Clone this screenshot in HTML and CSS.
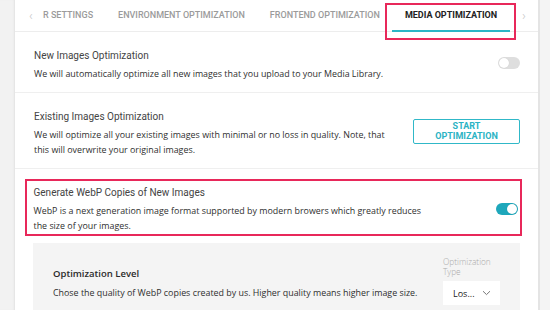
FILE: index.html
```html
<!DOCTYPE html>
<html lang="en">
<head>
<meta charset="utf-8">
<link rel="stylesheet" href="styles.css">
</head>
<body>
<div class="page">
  <div class="gutter"></div>
  <div class="panel">
    <div class="tabs">
      <span class="arrow">&#8249;</span>
      <span class="tab first">R SETTINGS</span>
      <span class="tab">ENVIRONMENT OPTIMIZATION</span>
      <span class="tab">FRONTEND OPTIMIZATION</span>
      <span class="tab active">MEDIA OPTIMIZATION</span>
      <span class="arrow right">&#8250;</span>
    </div>
    <div class="highlight-tab"></div>

    <div class="row">
      <div class="row-text">
        <div class="title">New Images Optimization</div>
        <div class="desc">We will automatically optimize all new images that you upload to your Media Library.</div>
      </div>
      <span class="toggle"><span class="knob"></span></span>
    </div>

    <div class="row">
      <div class="row-text">
        <div class="title">Existing Images Optimization</div>
        <div class="desc narrow">We will optimize all your existing images with minimal or no loss in quality. Note, that this will overwrite your original images.</div>
      </div>
      <button class="btn">START<br>OPTIMIZATION</button>
    </div>

    <div class="row boxed">
      <div class="row-text">
        <div class="title">Generate WebP Copies of New Images</div>
        <div class="desc wide">WebP is a next generation image format supported by modern browers which greatly reduces the size of your images.</div>
      </div>
      <span class="toggle on"><span class="knob"></span></span>
    </div>

    <div class="level">
      <div class="level-text">
        <div class="level-title">Optimization Level</div>
        <div class="level-desc">Chose the quality of WebP copies created by us. Higher quality means higher image size.</div>
      </div>
      <div class="level-type">
        <div class="type-label">Optimization<br>Type</div>
        <div class="select">
          <span>Los...</span>
          <svg width="9" height="6" viewBox="0 0 9 6"><path d="M1 1.2 L4.5 4.6 L8 1.2" fill="none" stroke="#777" stroke-width="1"/></svg>
        </div>
      </div>
    </div>
  </div>
  <div class="side"></div>
</div>
</body>
</html>
```

FILE: styles.css
```css
html, body {
  margin: 0;
  padding: 0;
}
body {
  background: #f3f3f3;
  font-family: "Open Sans", "Liberation Sans", sans-serif;
  color: #333;
}
.page {
  display: flex;
  height: 310px;
  overflow: hidden;
}
.gutter {
  width: 15px;
  flex: none;
  background: #f2f2f2;
  box-shadow: inset -2px 0 2px -1px #e2e2e2;
}
.panel {
  width: 523px;
  flex: none;
  background: #fff;
  border-right: 2px solid #e4e4e4;
  position: relative;
}
.side {
  flex: 1;
  background: #f4f4f4;
}
.tabs {
  display: flex;
  align-items: stretch;
  height: 31px;
  border-bottom: 1px solid #ededed;
  font-family: Roboto, "Liberation Sans", sans-serif;
  font-weight: 500;
  font-size: 9px;
  color: #9b9b9b;
  white-space: nowrap;
}
.arrow {
  display: flex;
  align-items: center;
  justify-content: center;
  width: 10px;
  margin-left: 11px;
  font-size: 13px;
  font-weight: 300;
  color: #c4c4c4;
}
.arrow.right {
  margin-left: auto;
  margin-right: 9px;
}
.tab {
  display: flex;
  align-items: center;
  padding: 0 12.5px;
  border-bottom: 2px solid transparent;
  margin-bottom: -1px;
}
.tab.first {
  padding-left: 7px;
}
.tab.active {
  color: #222;
  font-weight: 700;
  border-bottom-color: #2bb6c6;
}
.highlight-tab {
  position: absolute;
  left: 370px;
  top: 3px;
  width: 127px;
  height: 33px;
  border: 2.5px solid #e8285a;
}
.row {
  display: flex;
  align-items: center;
  justify-content: space-between;
  padding: 16px 18px 11px 19px;
  border-bottom: 1px solid #efefef;
}
.row-text {
  flex: 1;
}
.title {
  font-family: Roboto, "Liberation Sans", sans-serif;
  font-size: 10px;
  line-height: 16px;
  margin-bottom: 2px;
  color: #444;
}
.desc {
  font-size: 8.9px;
  line-height: 15px;
  color: #2f2f2f;
}
.desc.narrow {
  max-width: 360px;
}
.desc.wide {
  max-width: 396px;
}
.row.boxed {
  border: 2.5px solid #e8285a;
  margin: 10px 16px 0 10px;
  padding: 3.5px 2px 1.5px 6.5px;
}
.toggle {
  flex: none;
  width: 22px;
  height: 12px;
  border-radius: 6px;
  background: #dedede;
  position: relative;
  margin-bottom: 4px;
}
.knob {
  position: absolute;
  top: 1px;
  left: 1px;
  width: 10px;
  height: 10px;
  border-radius: 50%;
  background: #fff;
  box-shadow: 0 0 1px rgba(0,0,0,0.15);
}
.toggle.on {
  background: #1ea7bb;
  margin-bottom: 0;
}
.toggle.on .knob {
  left: 11px;
}
.btn {
  flex: none;
  width: 107px;
  height: 25px;
  background: #fff;
  border: 1.5px solid #30b8c8;
  border-radius: 2px;
  color: #2bb3c4;
  font-family: Roboto, "Liberation Sans", sans-serif;
  font-weight: 700;
  font-size: 9px;
  line-height: 10px;
  padding: 0;
  margin-bottom: 4px;
}
.level {
  display: flex;
  justify-content: space-between;
  margin: 7px 18px 0 18px;
  padding: 14px 20px 10px 20px;
  background: #f4f4f4;
}
.level-title {
  font-weight: 600;
  font-size: 9.5px;
  line-height: 16px;
  margin-top: 9px;
  color: #2a2a2a;
}
.level-desc {
  font-size: 8.9px;
  line-height: 16px;
  margin-top: 3px;
  color: #2f2f2f;
}
.level-type {
  width: 57px;
}
.type-label {
  font-size: 8.3px;
  line-height: 10px;
  color: #aaa;
  font-weight: 300;
  white-space: nowrap;
}
.select {
  margin-top: 4px;
  height: 24px;
  background: #fff;
  display: flex;
  align-items: center;
  justify-content: space-between;
  padding: 0 9px 0 10px;
  font-size: 9px;
  color: #222;
}
```
